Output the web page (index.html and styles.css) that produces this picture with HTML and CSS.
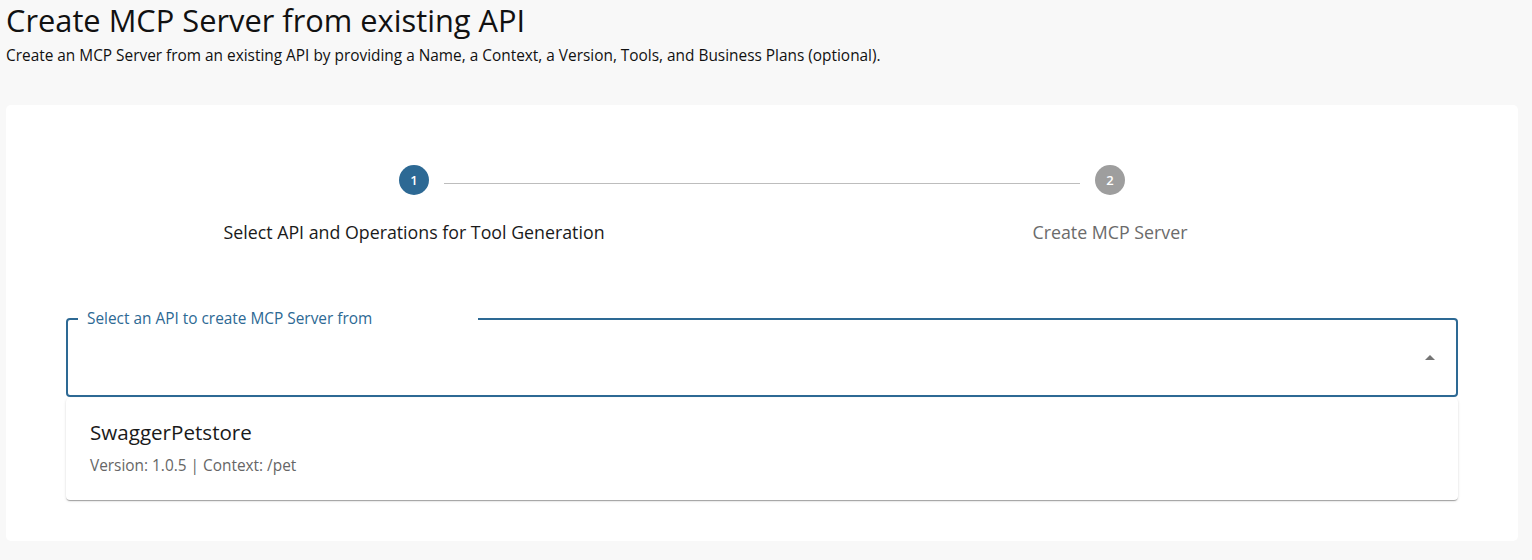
FILE: index.html
```html
<!DOCTYPE html>
<html>
<head>
<meta charset="utf-8">
<link rel="stylesheet" href="styles.css">
</head>
<body>
<div class="page">
  <header class="head">
    <h1 class="title">Create MCP Server from existing API</h1>
    <p class="subtitle">Create an MCP Server from an existing API by providing a Name, a Context, a Version, Tools, and Business Plans (optional).</p>
  </header>
  <section class="card">
    <div class="stepper">
      <div class="step">
        <div class="step-top">
          <span class="circle active">1</span>
        </div>
        <div class="step-label active-label">Select API and Operations for Tool Generation</div>
      </div>
      <div class="step">
        <div class="step-top">
          <span class="connector"></span>
          <span class="circle">2</span>
        </div>
        <div class="step-label">Create MCP Server</div>
      </div>
    </div>
    <div class="field">
      <fieldset class="outline">
        <legend class="legend">Select an API to create MCP Server from</legend>
      </fieldset>
      <div class="input-row">
        <svg class="arrow" width="24" height="24" viewBox="0 0 24 24"><path d="M7 14l5-5 5 5z" fill="#757575"/></svg>
      </div>
      <div class="menu">
        <div class="option">
          <div class="opt-name">SwaggerPetstore</div>
          <div class="opt-meta">Version: 1.0.5 | Context: /pet</div>
        </div>
      </div>
    </div>
  </section>
</div>
</body>
</html>
```
FILE: styles.css
```css
* { box-sizing: border-box; }
html, body { margin: 0; padding: 0; }
body {
  background: #f8f8f8;
  font-family: "Open Sans", "Noto Sans", sans-serif;
  color: #1a1a1a;
}
.page { padding: 0 14px 0 6px; }
.head { padding-top: 2px; }
.title {
  margin: 0;
  font-size: 30.8px;
  font-weight: 400;
  line-height: 36px;
  color: #111;
}
.subtitle {
  margin: 8px 0 0;
  font-size: 15.4px;
  line-height: 20px;
  color: #111;
}
.card {
  margin-top: 39px;
  background: #fff;
  border-radius: 5px;
  height: 436px;
  padding: 60px 60px 0 60px;
}
.stepper { display: flex; }
.step { flex: 1; display: flex; flex-direction: column; align-items: center; }
.step-top { position: relative; width: 100%; display: flex; justify-content: center; }
.circle {
  width: 30px; height: 30px; border-radius: 50%;
  background: #9e9e9e; color: #fff;
  font-size: 13px; font-weight: 600;
  display: flex; align-items: center; justify-content: center;
}
.circle.active { background: #2d6994; }
.connector {
  position: absolute; top: 18px;
  left: calc(-50% + 30px); right: calc(50% + 30px);
  border-top: 1px solid #bdbdbd;
}
.step-label {
  margin-top: 25px;
  font-size: 17.8px; line-height: 24px;
  color: #6b6b6b;
}
.active-label { color: #1a1a1a; }
.field { position: relative; margin-top: 75px; }
.outline {
  position: absolute; inset: 0 0 auto 0; height: 83px;
  margin: 0; padding: 0 10px;
  border: 2px solid #2d6994; border-radius: 4px;
  top: -5px;
}
.legend {
  padding: 0 9px;
  font-size: 15.4px; line-height: 10px;
  color: #2d6994;
  width: 400px;
  height: 10px;
  white-space: nowrap;
}
.input-row {
  height: 77px;
  display: flex; align-items: center; justify-content: flex-end;
  padding-right: 16px;
}
.arrow { display: block; }
.menu {
  margin-top: 2px;
  background: #fff;
  border-radius: 4px;
  box-shadow: 0 2px 1px -1px rgba(0,0,0,0.2), 0 1px 1px 0 rgba(0,0,0,0.14), 0 1px 3px 0 rgba(0,0,0,0.12);
  padding: 18px 24px 22px;
}
.opt-name { font-size: 20.6px; line-height: 32px; color: #1a1a1a; }
.opt-meta { font-size: 15.4px; line-height: 24px; color: #666; margin-top: 6px; }
```
